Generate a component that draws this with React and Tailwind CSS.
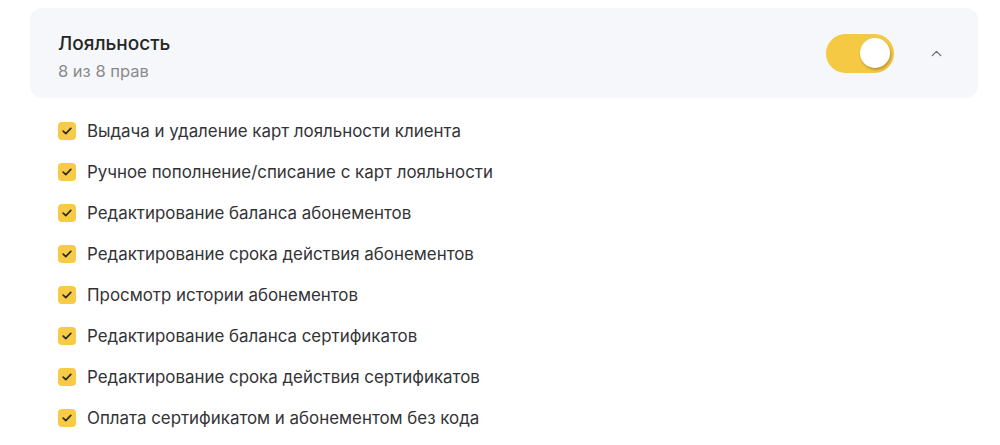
import { ChevronUp } from 'lucide-react';

const rights = [
  'Выдача и удаление карт лояльности клиента',
  'Ручное пополнение/списание с карт лояльности',
  'Редактирование баланса абонементов',
  'Редактирование срока действия абонементов',
  'Просмотр истории абонементов',
  'Редактирование баланса сертификатов',
  'Редактирование срока действия сертификатов',
  'Оплата сертификатом и абонементом без кода',
];

function Check() {
  return (
    <span className="flex h-[18px] w-[18px] shrink-0 items-center justify-center rounded-[4px] bg-[#f7cb45]">
      <svg width="10" height="8" viewBox="0 0 10 8" fill="none">
        <path d="M1.2 4.2 3.8 6.6 8.8 1.4" stroke="#2b2b2b" strokeWidth="1.7" strokeLinecap="round" strokeLinejoin="round" />
      </svg>
    </span>
  );
}

export default function App() {
  return (
    <div className="h-[445px] w-[1000px] overflow-hidden bg-white pt-2 font-['Inter',sans-serif]">
      <div className="ml-[30px] flex h-[90px] w-[948px] items-center rounded-[12px] bg-[#f6f7fa] pl-[28px] pr-[33px]">
        <div className="flex-1 pt-[7px]">
          <div className="text-[19px] font-medium leading-[24px] text-[#262626]">Лояльность</div>
          <div className="mt-[5px] text-[16.5px] leading-[20px] text-[#8a8a8e]">8 из 8 прав</div>
        </div>
        <div className="relative h-[39px] w-[68px] rounded-full bg-[#f6c944]">
          <span className="absolute right-[4px] top-[4.5px] h-[30px] w-[30px] rounded-full bg-white shadow-[1px_2px_3px_rgba(0,0,0,0.25)]" />
        </div>
        <ChevronUp className="ml-[34px] h-[17px] w-[17px] text-[#6b6b70]" strokeWidth={1.8} />
      </div>
      <ul className="ml-[58px] mt-[24px] flex flex-col gap-[23px]">
        {rights.map((r) => (
          <li key={r} className="flex h-[18px] items-center gap-[11px]">
            <Check />
            <span className="text-[16.9px] leading-[18px] text-[#333336]">{r}</span>
          </li>
        ))}
      </ul>
    </div>
  );
}
